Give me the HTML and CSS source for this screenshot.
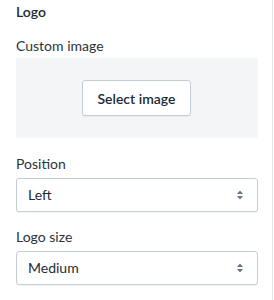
FILE: index.html
```
<!DOCTYPE html>
<html>
<head>
<meta charset="utf-8">
<link rel="stylesheet" href="styles.css">
</head>
<body>
<div class="panel">
  <h2 class="heading">Logo</h2>
  <div class="field field-image">
    <div class="label label-tight">Custom image</div>
    <div class="picker">
      <button class="btn" type="button">Select image</button>
    </div>
  </div>
  <div class="field field-position">
    <div class="label">Position</div>
    <div class="select">
      <span class="select-value">Left</span>
      <svg class="select-arrows" width="6" height="10" viewBox="0 0 6 10"><path d="M0 4L3 0.5L6 4Z M0 6L3 9.5L6 6Z" fill="#637381"/></svg>
    </div>
  </div>
  <div class="field field-size">
    <div class="label">Logo size</div>
    <div class="select">
      <span class="select-value">Medium</span>
      <svg class="select-arrows" width="6" height="10" viewBox="0 0 6 10"><path d="M0 4L3 0.5L6 4Z M0 6L3 9.5L6 6Z" fill="#637381"/></svg>
    </div>
  </div>
</div>
</body>
</html>
```
FILE: styles.css
```
html, body {
  margin: 0;
  padding: 0;
  background: #ffffff;
}

body {
  font-family: Lato, "Liberation Sans", sans-serif;
  font-size: 14px;
  line-height: 20px;
  color: #212b36;
}

.panel {
  box-sizing: border-box;
  width: 273px;
  min-height: 300px;
  border-right: 1px solid #e3e5e7;
  padding: 2px 14px 0 16px;
  display: flex;
  flex-direction: column;
}

.heading {
  margin: 0 0 14px;
  font-size: 14px;
  line-height: 20px;
  font-weight: 600;
  color: #212b36;
}

.field-position {
  margin-top: 16px;
}

.field-size {
  margin-top: 15px;
}

.label {
  margin-bottom: 4px;
  color: #2b3339;
}

.label-tight {
  margin-bottom: 2px;
}

.picker {
  height: 80px;
  background: #f4f5f6;
  border-radius: 3px;
  display: flex;
  align-items: center;
  justify-content: center;
  padding-right: 1px;
}

.btn {
  box-sizing: border-box;
  height: 36px;
  padding: 0 15px;
  font-family: inherit;
  font-size: 14px;
  font-weight: 600;
  color: #212b36;
  background: #ffffff;
  border: 1px solid #c4cdd5;
  border-radius: 3px;
  box-shadow: 0 1px 0 rgba(22, 29, 37, 0.05);
}

.select {
  box-sizing: border-box;
  height: 34px;
  border: 1px solid #c4cdd5;
  border-radius: 3px;
  box-shadow: 0 1px 0 rgba(22, 29, 37, 0.05);
  background: #ffffff;
  display: flex;
  align-items: center;
  justify-content: space-between;
  padding: 0 14px 0 11px;
}

.select-value {
  color: #212b36;
}

.select-arrows {
  display: block;
}
```
